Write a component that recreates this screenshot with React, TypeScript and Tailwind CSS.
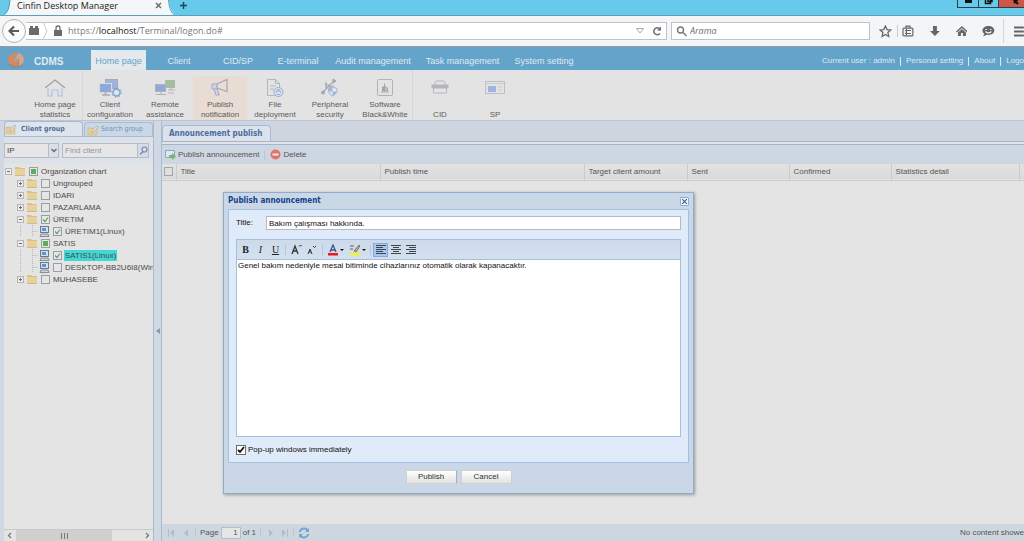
import React from 'react';

type CheckState = 'off' | 'on' | 'partial';

interface TreeRow {
    label: string;
    depth: number;
    kind: 'folder' | 'computer';
    state: CheckState;
    expander?: 'plus' | 'minus';
    selected?: boolean;
}

const treeRows: TreeRow[] = [
    { label: 'Organization chart', depth: 0, kind: 'folder', state: 'partial', expander: 'minus' },
    { label: 'Ungrouped', depth: 1, kind: 'folder', state: 'off', expander: 'plus' },
    { label: 'IDARI', depth: 1, kind: 'folder', state: 'off', expander: 'plus' },
    { label: 'PAZARLAMA', depth: 1, kind: 'folder', state: 'off', expander: 'plus' },
    { label: 'ÜRETIM', depth: 1, kind: 'folder', state: 'on', expander: 'minus' },
    { label: 'ÜRETIM1(Linux)', depth: 2, kind: 'computer', state: 'on' },
    { label: 'SATIS', depth: 1, kind: 'folder', state: 'partial', expander: 'minus' },
    { label: 'SATIS1(Linux)', depth: 2, kind: 'computer', state: 'on', selected: true },
    { label: 'DESKTOP-BB2U6I8(Win', depth: 2, kind: 'computer', state: 'off' },
    { label: 'MUHASEBE', depth: 1, kind: 'folder', state: 'off', expander: 'plus' },
];

const navItems = [
    { label: 'Home page', width: 'w-[55px]' },
    { label: 'Client', width: 'w-[66px]' },
    { label: 'CID/SP', width: 'w-[52px]' },
    { label: 'E-terminal', width: 'w-[68px]' },
    { label: 'Audit management', width: 'w-[82px]' },
    { label: 'Task management', width: 'w-[97px]' },
    { label: 'System setting', width: 'w-[66px]' },
];

const columns = [
    { label: 'Title', width: 'w-[204px]' },
    { label: 'Publish time', width: 'w-[204px]' },
    { label: 'Target client amount', width: 'w-[103px]' },
    { label: 'Sent', width: 'w-[102px]' },
    { label: 'Confirmed', width: 'w-[102px]' },
    { label: 'Statistics detail', width: 'w-[128px]' },
];

const HomeIcon = () => (
    <svg width="22" height="20" viewBox="0 0 22 20" fill="none" strokeWidth="1.2">
        <path d="M1 10 11 2l10 8" stroke="#8d8f94" />
        <path d="M4 10v8h4v-6h6v6h4v-8" stroke="#a9b9e0" />
    </svg>
);

const ClientConfigIcon = () => (
    <svg width="24" height="20" viewBox="0 0 24 20" fill="none">
        <rect x="7.5" y="1.5" width="12" height="9" fill="#8fa8de" stroke="#9b9ea6" />
        <rect x="1.5" y="5.5" width="12" height="9" fill="#7d9ad9" stroke="#d5d8df" />
        <path d="M4 17h8M7.5 14v3" stroke="#9b9ea6" strokeWidth="1.5" />
        <circle cx="18.5" cy="14.5" r="3.5" fill="#e3e3e3" stroke="#5f93cf" strokeWidth="1.5" />
        <circle cx="18.5" cy="14.5" r="4.8" stroke="#5f93cf" strokeDasharray="1.5 2.27" />
    </svg>
);

const RemoteIcon = () => (
    <svg width="24" height="20" viewBox="0 0 24 20" fill="none">
        <rect x="12.5" y="2.5" width="9" height="7" fill="#8fba86" stroke="#a4a7ab" />
        <path d="M15 12h7M18 10v2M15 15h6" stroke="#a4a7ab" />
        <rect x="2.5" y="6.5" width="10" height="7" fill="#7d9ad9" stroke="#a4a7ab" />
        <path d="M3 16.5h10M8 14v2" stroke="#a4a7ab" />
    </svg>
);

const MegaphoneIcon = () => (
    <svg width="22" height="20" viewBox="0 0 22 20" fill="none">
        <path d="M8 6 18 1.5v12L8 10z" stroke="#9a9ca4" strokeWidth="1.2" />
        <path d="M3 6h5v5H3z" fill="#c9cfe0" stroke="#8aa1d8" />
        <path d="m5 11 2 6h3l-2-6" stroke="#8aa1d8" strokeWidth="1.2" />
    </svg>
);

const FileIcon = () => (
    <svg width="20" height="20" viewBox="0 0 20 20" fill="none">
        <path d="M2.5 1.5h8l4 4v12h-12z" stroke="#a9acb1" />
        <path d="M10.5 1.5v4h4M5 8h6M5 11h4" stroke="#a9acb1" />
        <circle cx="13.5" cy="14" r="4.5" fill="#dfe4f0" stroke="#84a0d8" />
        <path d="m11 14.5 2.5-3 2.5 3M11.5 16.5h4" stroke="#84a0d8" strokeWidth="1.2" />
    </svg>
);

const PeripheralIcon = () => (
    <svg width="20" height="20" viewBox="0 0 20 20" fill="none" stroke="#95989e">
        <path d="M2 15 14 3M6 10V4M10 7H5M9 9l5-1" strokeWidth="1.2" />
        <circle cx="3" cy="14.5" r="1.5" fill="#95989e" />
        <path d="m13 1 3 2-3 2z" fill="#95989e" />
        <path d="M12.5 9 17 10.5v3q-1 3-4.5 4.5Q9 16.5 8.5 13.5v-3z" fill="#e6eaf4" stroke="#93abdf" />
        <path d="M12.5 9v4.5H17q-1 3-4.5 4.5v-4.5h-4v-3z" fill="#93abdf" stroke="none" />
    </svg>
);

const SoftwareIcon = () => (
    <svg width="18" height="20" viewBox="0 0 18 20" fill="none" stroke="#a5a7ab">
        <rect x="1.5" y="1.5" width="15" height="16" rx="1" />
        <path d="M6 13.5V9l2-1V5l1 1v2l3 2v3.5z" fill="#94969c" stroke="none" />
        <path d="M9.5 9.5h1v3h-1z" fill="#e3e3e3" stroke="none" />
        <path d="M5 14h8" />
    </svg>
);

const CidIcon = () => (
    <svg width="20" height="18" viewBox="0 0 20 18" fill="none" stroke="#adafb3">
        <path d="M4 7 6 3h8l2 4" />
        <rect x="2" y="7" width="16" height="3" fill="#a6a8ad" />
        <path d="M3.5 10v5h13v-5" />
    </svg>
);

const SpIcon = () => (
    <svg width="22" height="18" viewBox="0 0 22 18" fill="none">
        <rect x="1.5" y="3.5" width="19" height="12" stroke="#b4b7bf" />
        <path d="M2 5.5h18" stroke="#c3c6cd" />
        <rect x="4" y="8" width="8" height="6" fill="#8fa9e0" />
        <path d="M14 9h4M14 12h4" stroke="#c3c6cd" />
    </svg>
);

const actions = [
    { lines: ['Home page', 'statistics'], Icon: HomeIcon },
    { lines: ['Client', 'configuration'], Icon: ClientConfigIcon },
    { lines: ['Remote', 'assistance'], Icon: RemoteIcon },
    { lines: ['Publish', 'notification'], Icon: MegaphoneIcon, active: true },
    { lines: ['File', 'deployment'], Icon: FileIcon },
    { lines: ['Peripheral', 'security'], Icon: PeripheralIcon },
    { lines: ['Software', 'Black&White'], Icon: SoftwareIcon },
    { lines: ['CID'], Icon: CidIcon },
    { lines: ['SP'], Icon: SpIcon },
];

const FolderEditIcon = () => (
    <svg width="12" height="12" viewBox="0 0 12 12" className="shrink-0">
        <path d="M1 4h4l1 1h4v6H1z" fill="#e5cf98" stroke="#cdb274" strokeWidth=".6" />
        <path d="m5 7 4-5 2 1-4 5-2 1z" fill="#f3e3b8" stroke="#93a7c4" strokeWidth=".7" />
    </svg>
);

const Expander = ({ kind }: { kind: 'plus' | 'minus' }) => (
    <svg width="7" height="7" viewBox="0 0 7 7" fill="none" stroke="#b5b5b5" className="shrink-0">
        <rect x=".5" y=".5" width="6" height="6" fill="#ececec" />
        <path d={kind === 'plus' ? 'M2 3.5h3M3.5 2v3' : 'M2 3.5h3'} stroke="#707070" />
    </svg>
);

const FolderIcon = () => (
    <svg width="12" height="10" viewBox="0 0 12 10" className="shrink-0">
        <path d="M1 2V1h4l1 1h5v7H1z" fill="#dcbf80" />
        <path d="M1 3h10v6H1z" fill="#e8d29b" />
        <path d="M1 9.5h10" stroke="#c5a868" strokeWidth=".7" />
    </svg>
);

const ComputerIcon = () => (
    <svg width="11" height="11" viewBox="0 0 11 11" className="shrink-0">
        <rect x="1.5" y=".5" width="8" height="6" fill="#cfe0f4" stroke="#6f7a88" />
        <path d="M3 2h4v3H3z" fill="#5d94d3" />
        <path d="m2 8-1 2.5h9L9 8z" fill="#d0d3d8" stroke="#6f7a88" strokeWidth=".8" />
    </svg>
);

const TreeCheck = ({ row }: { row: TreeRow }) => (
    <span className="relative flex shrink-0">
        <input
            id={`node-${row.label}`}
            type="checkbox"
            defaultChecked={row.state !== 'off'}
            className="size-[9px] appearance-none border border-[#989da6] bg-[#e6e6e6]"
        />
        {row.state !== 'off' && (
            <svg viewBox="0 0 9 9" className="pointer-events-none absolute inset-0 size-[9px]" fill="none">
                {row.state === 'on' ? (
                    <path d="m2 4.5 2 2 3-4" stroke="#5ba362" strokeWidth="1.2" />
                ) : (
                    <path d="M2 2h5v5H2z" fill="#58b158" />
                )}
            </svg>
        )}
    </span>
);

const BrowserChrome = () => (
    <div className="shrink-0 font-['Open_Sans','Noto_Sans',sans-serif]">
        <div className="flex h-[15px] items-start overflow-hidden bg-[#67caeb]">
            <div className="relative ml-1 flex h-[15px] w-[170px] items-start">
                <svg viewBox="0 0 170 15" className="absolute inset-0 h-[15px] w-[170px]">
                    <path d="M0 15q5-2 6-15h159q1 13 8 15z" fill="#f5f6f7" />
                    <path d="M0 14.5q5-2 6-14.5M164.500 0q1 12 6 15" fill="none" stroke="#4a9fbd" />
                </svg>
                <span className="relative ml-[13px] text-[9px] leading-[11px] text-[#222]">Cinfin Desktop Manager</span>
                <button aria-label="Close tab" className="relative mt-[2px] ml-auto mr-3">
                    <svg width="7" height="7" viewBox="0 0 7 7" stroke="#6d6d6d" strokeWidth="1.5"><path d="m1 1 5 5M6 1 1 6" /></svg>
                </button>
            </div>
            <button aria-label="New tab" className="ml-[5px] mt-[1px]">
                <svg width="9" height="9" viewBox="0 0 9 9" stroke="#17495b" strokeWidth="1.5"><path d="M4.5 1v7M1 4.5h7" /></svg>
            </button>
            <div className="ml-auto flex h-2 border-b border-l border-[#2b3f47]">
                <button aria-label="Minimize" className="w-[21px] border-r border-[#2b3f47]">
                    <svg width="20" height="7" viewBox="0 0 20 7" fill="#101010"><path d="M7 0h7v3H7z" /></svg>
                </button>
                <button aria-label="Restore" className="w-5 border-r border-[#2b3f47]">
                    <svg width="18" height="7" viewBox="0 0 18 7" fill="none" stroke="#101010" strokeWidth="1.5"><path d="M6.5 0v3.5h5V0M9 0V1.500h4V0" /></svg>
                </button>
                <button aria-label="Close" className="w-[25px] bg-[#cf5549]">
                    <svg width="25" height="7" viewBox="0 0 25 7" stroke="#101010" strokeWidth="2"><path d="m15 3 4-4M14-1l5 5" /></svg>
                </button>
            </div>
        </div>
        <div className="flex h-8 items-center border-t border-b border-t-[#5d9fb8] border-b-[#9a9a9a] bg-[#f4f5f6]">
            <button aria-label="Back" className="ml-[2px] flex size-6 shrink-0 items-center justify-center rounded-full border border-[#b2b2b2] bg-[#fbfbfb]">
                <svg width="12" height="12" viewBox="0 0 12 12" fill="none" stroke="#5c5c5c" strokeWidth="2.200"><path d="M11 6H2M6 1.500 1.500 6 6 10.500" /></svg>
            </button>
            <div className="flex h-[18px] min-w-0 flex-1 items-center border border-l-0 border-[#bfc3c6] bg-white">
                <svg width="40" height="18" viewBox="0 0 40 18" className="shrink-0" fill="#6b6b6b">
                    <path d="M3 6h1V4h3v2h2V4h3v2h1v7H3z" />
                    <path d="m17 0 4 9-4 9" fill="none" stroke="#ccc" />
                    <path d="M28 8h8v6h-8z" />
                    <path d="M30 8V6q0-2 2-2t2 2v2" fill="none" stroke="#6b6b6b" strokeWidth="1.300" />
                </svg>
                <span className="ml-[2px] text-[9px] text-[#777]">https://<span className="text-[#111]">localhost</span>/Terminal/logon.do#</span>
                <svg width="8" height="6" viewBox="0 0 8 6" className="ml-auto mr-2" fill="none" stroke="#a8a8a8"><path d="M.5.5h7L4 5z" /></svg>
                <button aria-label="Reload" className="mr-1">
                    <svg width="10" height="10" viewBox="0 0 10 10" fill="none" stroke="#6b6b6b" strokeWidth="1.500"><path d="M8 7.500A3.500 3.500 0 1 1 8 3" /><path d="M9 .5V4.500H5z" fill="#6b6b6b" stroke="none" /></svg>
                </button>
            </div>
            <label className="ml-1 flex h-[18px] w-[199px] items-center border border-[#bfc3c6] bg-white">
                <svg width="11" height="11" viewBox="0 0 11 11" className="ml-1 shrink-0" fill="none" stroke="#777" strokeWidth="1.400"><circle cx="4.500" cy="4" r="3" /><path d="m7 6.500 3.500 3.500" /></svg>
                <input aria-label="Arama" placeholder="Arama" className="ml-[3px] w-full text-[9px] italic outline-none placeholder:text-[#6d6d6d]" />
            </label>
            <div className="flex w-[154px] shrink-0 items-center pl-[9px] text-[#666]">
                <svg width="13" height="13" viewBox="0 0 13 13" fill="none" stroke="currentColor" strokeWidth="1.300"><path d="m6.500 1 1.600 3.600 3.900.4-3 2.600.9 3.900-3.400-2-3.400 2 .9-3.900-3-2.600 3.900-.4z" /></svg>
                <span className="ml-[5px] h-3 w-px bg-[#ccc]" />
                <svg width="12" height="12" viewBox="0 0 12 12" className="ml-1" fill="none" stroke="currentColor" strokeWidth="1.200"><rect x="1" y="3" width="10" height="8" rx="1" /><path d="M4 3V1h4v2M3 5.500h6M3 8.500h6M4.500 4v6" /></svg>
                <svg width="12" height="12" viewBox="0 0 12 12" className="ml-[15px]" fill="currentColor"><path d="M4 1h4v5h3l-5 5-5-5h3z" /></svg>
                <svg width="12" height="12" viewBox="0 0 12 12" className="ml-[15px]" fill="currentColor"><path d="M6 1 0 6.500l1 1L6 3l5 4.500 1-1zM2 7.500 6 4l4 3.500V11H7V8H5v3H2z" /></svg>
                <svg width="13" height="12" viewBox="0 0 13 12" className="ml-[15px]" fill="currentColor"><path d="M6.500 1C3 1 .5 3 .5 5.500c0 1.500.8 2.600 2 3.400L1 11.500l4-1.600c4 .6 7.500-1.400 7.500-4.400C12.500 3 10 1 6.500 1z" /><path d="M3.500 4.500h1.500M8 4.500h1.500M3.500 6.500q3 3 6 0" fill="none" stroke="#f4f5f6" strokeWidth="1.200" /></svg>
                <span className="ml-2 h-6 w-px bg-[#d6d6d6]" />
                <svg width="10" height="11" viewBox="0 0 10 11" className="ml-[10px]" stroke="currentColor" strokeWidth="2"><path d="M0 1.500h10M0 5.500h10M0 9.500h10" /></svg>
            </div>
        </div>
    </div>
);

const Header = () => (
    <header className="flex h-[23px] shrink-0 items-end bg-[#64a4ca] text-[#dfeaf1]">
        <div className="flex h-5 w-[91px] items-center">
            <svg width="18" height="18" viewBox="0 0 18 18" className="ml-[7px] shrink-0">
                <ellipse cx="9" cy="14" rx="7" ry="3" fill="#7f8ea1" />
                <path d="M1 9A8 7 0 0 1 11 2L6 9h5v6A8 7 0 0 1 1 9z" fill="#d9885b" />
                <path d="M11 2a7 7 0 0 1 6 7 7 7 0 0 1-5 6V8H8z" fill="#e0a17c" />
                <path d="M6 9.500 10.500 4.500v5z" fill="#8fb0c6" />
            </svg>
            <span className="ml-[9px] mt-[2px] text-[10px] font-bold">CDMS</span>
        </div>
        <nav className="flex text-[9px]">
            {navItems.map((item, i) => (
                <a
                    key={item.label}
                    href="#"
                    className={`${item.width} flex h-5 items-center justify-center whitespace-nowrap pt-1 ${i === 0 ? 'bg-[#e6e9ec] text-[#64a4ca]' : ''}`}
                >
                    {item.label}
                </a>
            ))}
        </nav>
        <div className="mb-1 ml-auto flex items-center gap-[5px] whitespace-nowrap text-[8px] leading-[10px]">
            <span>Current user : admin</span>
            <span className="h-[9px] w-px bg-[#dfeaf1]" />
            <a href="#">Personal setting</a>
            <span className="h-[9px] w-px bg-[#dfeaf1]" />
            <a href="#">About</a>
            <span className="h-[9px] w-px bg-[#dfeaf1]" />
            <a href="#">Logo</a>
        </div>
    </header>
);

const ActionBar = () => (
    <div className="flex h-[50px] shrink-0 bg-[#e3e3e3] pl-7 text-[8px] leading-[10px] text-[#5b5b5b]">
        {actions.map(({ lines, Icon, active }, i) => (
            <button
                key={lines[0]}
                className={`flex w-[55px] flex-col border-r pt-[6px] ${i === 0 || i === 6 ? 'border-[#d3d6da]' : 'border-transparent'}`}
            >
                <span className={`flex w-full flex-1 flex-col items-center justify-between ${active ? 'bg-[#e8dcd5]' : ''}`}>
                    <span className="pt-[2px] opacity-80"><Icon /></span>
                    <span className="whitespace-nowrap">
                        {lines.map((line) => <span key={line} className="block">{line}</span>)}
                    </span>
                </span>
            </button>
        ))}
    </div>
);

const Sidebar = () => (
    <aside className="flex w-[153px] shrink-0 flex-col border-l-4 border-[#d0d8e4] bg-[#e4e4e4]">
        <div className="flex h-4 items-end border-b border-[#a9bbd3] bg-[#d0d8e4] font-['DejaVu_Sans_Condensed','DejaVu_Sans',sans-serif] text-[7px]">
            <button className="flex h-[15px] w-[79px] items-center gap-1 rounded-t-sm border border-b-0 border-[#a9bbd3] bg-[#dfe4ec] font-bold text-[#4d6d9d]">
                <FolderEditIcon />Client group
            </button>
            <button className="ml-px flex h-[14px] flex-1 items-center gap-[2px] rounded-t-sm border border-b-0 border-[#a9bbd3] bg-[#cad7e7] pl-[2px] text-[#7391bb]">
                <FolderEditIcon />Search group
            </button>
        </div>
        <div className="flex h-[27px] items-center bg-[#dde1e8] pr-1 text-[8px]">
            <label className="relative flex h-[15px] w-[55px] items-center border border-[#b5bcc8] bg-[#e6e6e6]">
                <select aria-label="Search by" className="w-full appearance-none pl-[2px] text-[8px] text-[#444] outline-none">
                    <option>IP</option>
                </select>
                <span className="pointer-events-none absolute inset-y-0 right-0 flex w-[10px] items-center justify-center border-l border-[#b5bcc8] bg-[#dcdfe4]">
                    <svg width="6" height="5" viewBox="0 0 6 5" fill="none" stroke="#666" strokeWidth="1.300"><path d="m.5 1 2.500 2.500L5.500 1" /></svg>
                </span>
            </label>
            <label className="ml-[3px] flex h-[15px] min-w-0 flex-1 items-center border border-[#b5bcc8] bg-[#e6e6e6]">
                <input aria-label="Find client" placeholder="Find client" className="w-full min-w-0 pl-[2px] text-[8px] outline-none placeholder:text-[#969696]" />
                <span className="flex h-full w-[11px] shrink-0 items-center justify-center border-l border-[#b5bcc8] bg-[#d6dce6]">
                    <svg width="9" height="9" viewBox="0 0 9 9" fill="none" stroke="#7489ad" strokeWidth="1.200"><circle cx="5.500" cy="3.500" r="2.500" /><path d="M4 5.500 1 8.500" /></svg>
                </span>
            </label>
        </div>
        <ul className="flex-1 pt-px text-[8px] text-[#4a4a4a]">
            {treeRows.map((row) => (
                <li key={row.label} className={`flex h-3 items-center overflow-hidden whitespace-nowrap ${row.depth === 0 ? 'pl-px' : 'pl-[13px]'}`}>
                    {row.expander ? <Expander kind={row.expander} /> : (
                        <svg width="22" height="12" viewBox="0 0 22 12" className="shrink-0" stroke="#b5b5b5" strokeDasharray="1 1"><path d="M3.500 0v12M15.500 0v12M15.500 6.500h6" /></svg>
                    )}
                    <span className={row.expander ? 'ml-[2px] mr-[3px]' : 'mr-[3px]'}>
                        {row.kind === 'folder' ? <FolderIcon /> : <ComputerIcon />}
                    </span>
                    <TreeCheck row={row} />
                    <label htmlFor={`node-${row.label}`} className={`ml-[2px] px-px leading-[11px] ${row.selected ? 'bg-[#3fd8d4]' : ''}`}>{row.label}</label>
                </li>
            ))}
        </ul>
        <div className="flex h-3 shrink-0 items-center border-t border-[#c9c9c9] bg-[#e4e4e4]">
            <svg width="12" height="11" viewBox="0 0 12 11" fill="none" stroke="#777" strokeWidth="1.300"><path d="M7 3 4.500 5.500 7 8" /></svg>
            <span className="flex h-full w-24 items-center justify-center bg-[#cfcfcf]">
                <svg width="7" height="6" viewBox="0 0 7 6" stroke="#777"><path d="M.5 0v6M3.500 0v6M6.500 0v6" /></svg>
            </span>
            <svg width="12" height="11" viewBox="0 0 12 11" className="ml-auto" fill="none" stroke="#777" strokeWidth="1.300"><path d="M5 3l2.500 2.500L5 8" /></svg>
        </div>
    </aside>
);

const Content = () => (
    <main className="flex min-w-0 flex-1 flex-col border-l border-[#a9bbd3] bg-[#e4e4e4] text-[8px] text-[#555]">
        <div className="flex h-[21px] shrink-0 items-end border-b border-[#a3b5cd] bg-[#cfd5e0]">
            <button className="h-4 rounded-t-sm border border-b-0 border-[#a9bbd3] bg-[#dce2eb] pl-[6px] pr-2 font-['DejaVu_Sans_Condensed','DejaVu_Sans',sans-serif] font-bold text-[#4d6d9d]">
                Announcement publish
            </button>
        </div>
        <div className="mt-[2px] flex h-5 shrink-0 items-center border-t border-[#a3b5cd] bg-[#ced6e1] pl-[3px]">
            <button className="flex items-center gap-[2px]">
                <svg width="11" height="11" viewBox="0 0 11 11"><path d="M.5 1.500h9v7h-9z" fill="#dfe7f0" stroke="#8ba5c7" /><path d="M4 6h3V4l4 3.500L7 11V9H4z" fill="#74b868" /></svg>
                Publish announcement
            </button>
            <span className="mx-[5px] h-[10px] w-px bg-[#bbc5d3]" />
            <button className="flex items-center gap-[2px]">
                <svg width="11" height="11" viewBox="0 0 11 11"><circle cx="5.500" cy="5.500" r="5" fill="#dc766d" /><path d="M2.500 5.500h6" stroke="#f4e7e5" strokeWidth="2" /></svg>
                Delete
            </button>
        </div>
        <table className="w-full table-fixed border-collapse">
            <thead>
                <tr className="h-4 border-b border-[#cbcbcb] bg-gradient-to-b from-[#e3e3e3] to-[#d9dadb]">
                    <th className="w-[14px] border-r border-[#cbcbcb]">
                        <input type="checkbox" aria-label="Select all" className="ml-[2px] block size-[9px] appearance-none border border-[#a2a5aa] bg-[#dfdfdf]" />
                    </th>
                    {columns.map((c) => (
                        <th key={c.label} className={`${c.width} border-r border-[#cbcbcb] pl-1 text-left font-normal`}>{c.label}</th>
                    ))}
                    <th />
                </tr>
            </thead>
        </table>
        <div className="flex-1" />
        <footer className="flex h-[17px] shrink-0 items-center bg-[#ced6e0] pl-[5px]">
            <svg width="24" height="8" viewBox="0 0 24 8" fill="#b3bdca"><path d="M1 0h1v8H1zM7 0v8L3 4zM21 0v8l-4-4z" /></svg>
            <span className="mx-1 h-[9px] w-px bg-[#bbc5d3]" />
            <label htmlFor="page">Page</label>
            <input id="page" defaultValue="1" className="ml-[2px] h-3 w-5 border border-[#b5bcc8] bg-[#e6e6e6] pr-[2px] text-right" />
            <span className="ml-[2px]">of 1</span>
            <span className="mx-1 h-[9px] w-px bg-[#bbc5d3]" />
            <svg width="28" height="8" viewBox="0 0 28 8" fill="#b3bdca"><path d="M4 0v8l4-4zM17 0v8l4-4zM22 0h1v8h-1z" /></svg>
            <span className="mr-1 h-[9px] w-px bg-[#bbc5d3]" />
            <button aria-label="Refresh">
                <svg width="12" height="12" viewBox="0 0 12 12" fill="none" stroke="#76a5d0" strokeWidth="1.800"><path d="M1.500 5Q3 1.500 6 1.500T9.500 4M10.500 7Q9 10.500 6 10.500T2.500 8" /><path d="M11 1v4H7zM1 11V7h4z" fill="#76a5d0" stroke="none" /></svg>
            </button>
            <span className="ml-auto whitespace-nowrap">No content showe</span>
        </footer>
    </main>
);

const AlignIcon = ({ d }: { d: string }) => (
    <svg width="10" height="9" viewBox="0 0 10 9" stroke="#3c4450"><path d={d} /></svg>
);

const PublishDialog = () => (
    <section
        role="dialog"
        aria-label="Publish announcement"
        className="absolute left-[223px] top-[192px] flex h-[302px] w-[471px] flex-col border border-[#8fabcf] bg-[#cad7e7] px-1 pb-1 font-['Liberation_Sans',sans-serif] text-[8px] text-[#111] shadow-[1px_1px_3px_#999]"
    >
        <div className="flex h-4 shrink-0 items-center justify-between">
            <h2 className="font-['DejaVu_Sans_Condensed','DejaVu_Sans',sans-serif] font-bold text-[#15428b]">Publish announcement</h2>
            <button aria-label="Close dialog" className="flex size-[9px] items-center justify-center rounded-[1px] border border-[#8fabcf] bg-[#eef4fb]">
                <svg width="5" height="5" viewBox="0 0 5 5" stroke="#3d64a0" strokeWidth="1.200"><path d="m0 0 5 5M5 0 0 5" /></svg>
            </button>
        </div>
        <div className="flex min-h-0 flex-1 flex-col border border-[#a3bfe2] bg-[#dfebf8] px-[7px]">
            <div className="mt-[6px] flex shrink-0 items-center">
                <label htmlFor="title" className="w-[30px]">Title:</label>
                <input id="title" defaultValue="Bakım çalışması hakkında." className="h-[14px] min-w-0 flex-1 border border-[#b5b8c8] bg-white px-[2px] outline-none" />
            </div>
            <div className="mt-[9px] flex min-h-0 flex-1 flex-col border border-[#a3bfe2]">
                <div className="flex h-5 shrink-0 items-center border-b border-[#a9bfd3] bg-gradient-to-b from-[#cddaea] to-[#d3e0ef] pl-px font-['Liberation_Serif',serif] text-[10px] leading-3 text-[#222]">
                    <button aria-label="Bold" className="w-[15px] font-bold">B</button>
                    <button aria-label="Italic" className="w-[15px] italic">I</button>
                    <button aria-label="Underline" className="w-[15px] underline">U</button>
                    <span className="mx-[2px] h-[10px] w-px bg-[#b6c6da]" />
                    <button aria-label="Grow text" className="flex w-4 items-center justify-center">
                        <svg width="11" height="11" viewBox="0 0 11 11" fill="none" stroke="#333"><path d="m1 10 3-8 3 8M2 7h4" strokeWidth="1.300" /><path d="M8 2.500 9.500 1 11 2.500" /></svg>
                    </button>
                    <button aria-label="Shrink text" className="flex w-4 items-center justify-center">
                        <svg width="10" height="11" viewBox="0 0 10 11" fill="none" stroke="#333"><path d="m1 10 2-5 2 5M2 8h2" /><path d="M6 2l1.500 1.500L9 2" /></svg>
                    </button>
                    <span className="mx-[2px] h-[10px] w-px bg-[#b6c6da]" />
                    <button aria-label="Font color" className="flex w-[21px] items-center justify-center">
                        <svg width="17" height="12" viewBox="0 0 17 12" fill="none"><path d="m3 8 3-7 3 7M4 6h4" stroke="#34558b" strokeWidth="1.300" /><path d="M1 9h10v2.500H1z" fill="#f01818" /><path d="M13 5h4l-2 2z" fill="#111" /></svg>
                    </button>
                    <button aria-label="Highlight color" className="flex w-[22px] items-center justify-center">
                        <svg width="17" height="12" viewBox="0 0 17 12" fill="none"><path d="M1 9h10v2.500H1z" fill="#f4f42a" /><path d="m5 7 5-6 1 1-4 6z" fill="#d8b548" stroke="#59626e" strokeWidth=".8" /><path d="M1 2h4M1 5h3" stroke="#59626e" /><path d="M13 5h4l-2 2z" fill="#111" /></svg>
                    </button>
                    <span className="mx-[2px] h-[10px] w-px bg-[#b6c6da]" />
                    <button aria-label="Align left" className="flex h-[14px] w-[15px] items-center justify-center border border-[#83aade] bg-[#abc7ec]"><AlignIcon d="M0 .5h10M0 2.500h7M0 4.500h10M0 6.500h7M0 8.500h10" /></button>
                    <button aria-label="Align center" className="flex w-[15px] justify-center"><AlignIcon d="M0 .5h10M2 2.500h6M0 4.500h10M2 6.500h6M0 8.500h10" /></button>
                    <button aria-label="Align right" className="flex w-[15px] justify-center"><AlignIcon d="M0 .5h10M3 2.500h7M0 4.500h10M3 6.500h7M0 8.500h10" /></button>
                </div>
                <textarea
                    aria-label="Announcement"
                    defaultValue="Genel bakım nedeniyle mesai bitiminde cihazlarınız otomatik olarak kapanacaktır."
                    className="min-h-0 flex-1 resize-none bg-white px-px py-px leading-[10px] outline-none"
                />
            </div>
            <div className="flex h-[25px] shrink-0 items-center">
                <span className="relative flex">
                    <input id="popup" type="checkbox" defaultChecked className="size-[10px] appearance-none border border-[#6b6b6b] bg-white" />
                    <svg viewBox="0 0 10 10" className="pointer-events-none absolute inset-0 size-[10px]" fill="none" stroke="#111" strokeWidth="1.800"><path d="m2 5 2 2 4-5" /></svg>
                </span>
                <label htmlFor="popup" className="ml-[2px]">Pop-up windows immediately</label>
            </div>
        </div>
        <div className="flex h-[26px] shrink-0 items-end justify-center gap-1 pb-[5px]">
            <button className="h-[14px] w-[51px] border border-[#d0d0d0] border-r-[#9fb0c8] bg-gradient-to-b from-white to-[#e2e2e2] text-[#333]">Publish</button>
            <button className="h-[14px] w-[51px] border border-[#d0d0d0] bg-gradient-to-b from-white to-[#e2e2e2] text-[#333]">Cancel</button>
        </div>
    </section>
);

export default function App() {
    return (
        <div className="relative flex h-screen flex-col overflow-hidden bg-[#e4e4e4] font-['Liberation_Sans',sans-serif]">
            <BrowserChrome />
            <Header />
            <ActionBar />
            <div className="flex min-h-0 flex-1 border-t border-[#b9c6d8] bg-[#d0d8e4]">
                <Sidebar />
                <div className="flex w-2 shrink-0 items-center justify-center border-l border-[#a9bbd3]">
                    <svg width="4" height="6" viewBox="0 0 4 6" fill="#8799b3"><path d="M4 0v6L0 3z" /></svg>
                </div>
                <Content />
            </div>
            <PublishDialog />
        </div>
    );
}
